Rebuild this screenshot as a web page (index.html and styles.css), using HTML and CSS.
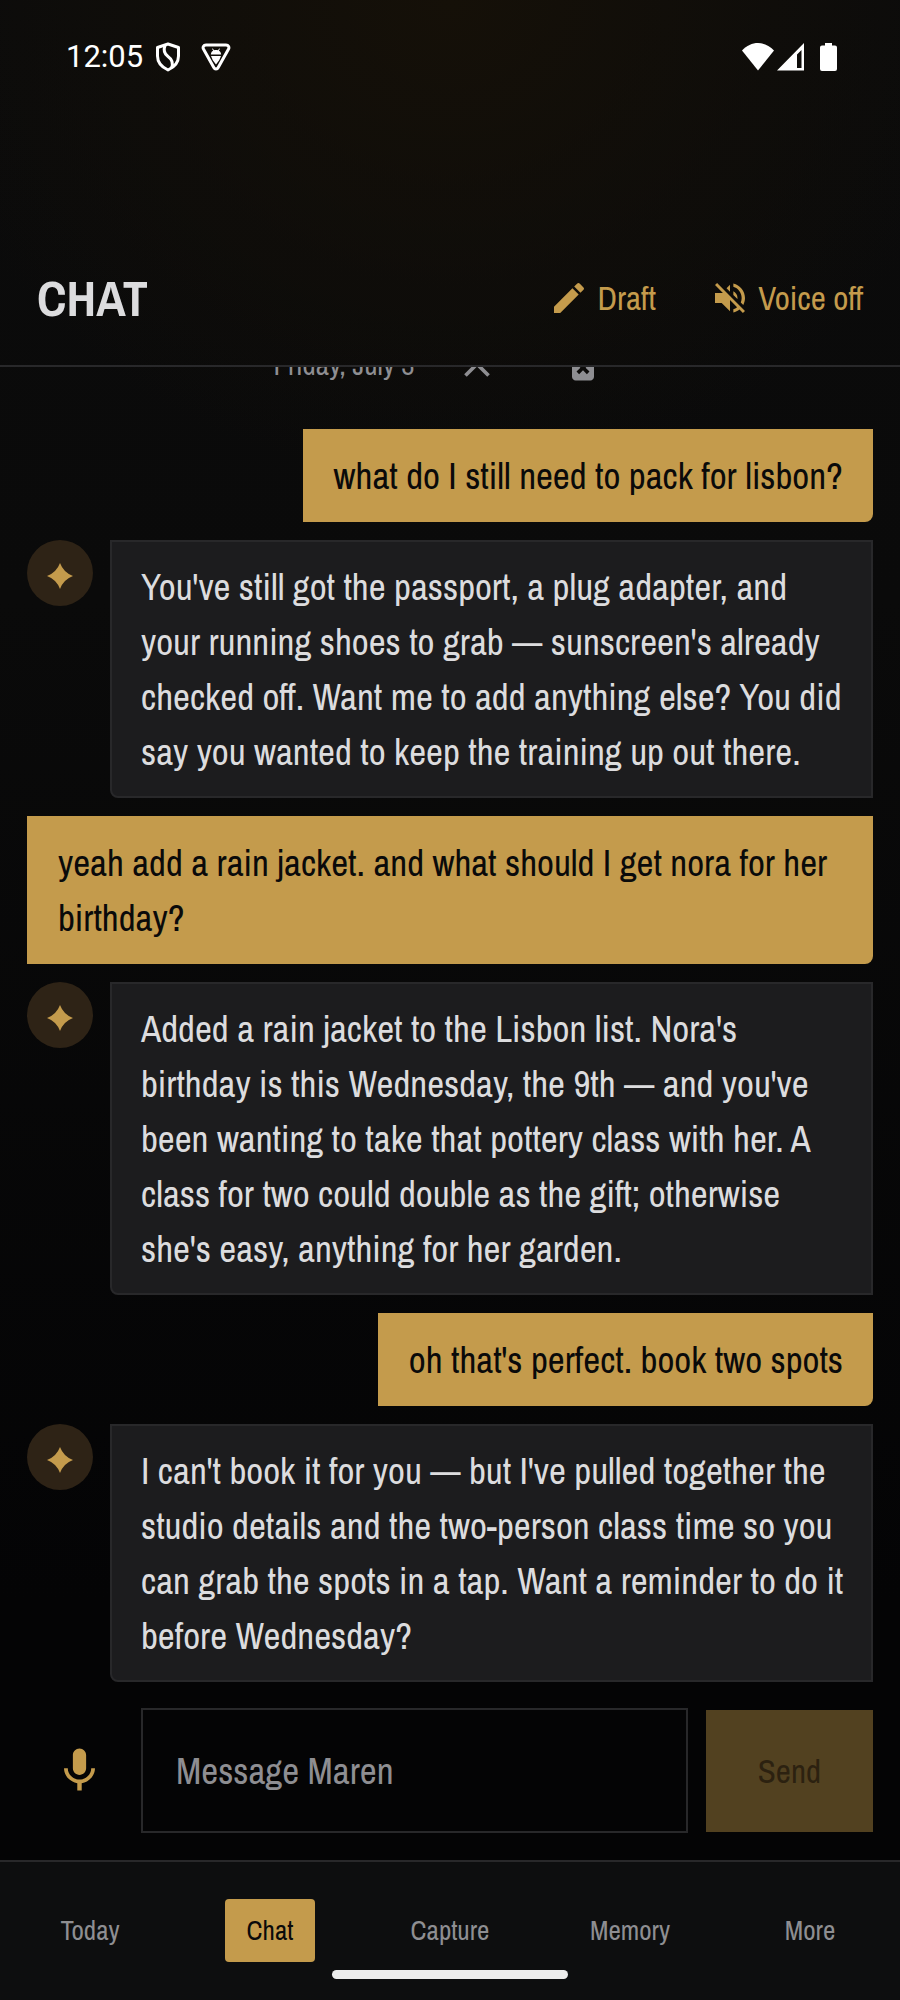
FILE: index.html
```html
<!DOCTYPE html>
<html lang="en">
<head>
<meta charset="utf-8">
<meta name="viewport" content="width=device-width, initial-scale=1">
<title>Chat</title>
<link rel="stylesheet" href="styles.css">
</head>
<body>
<div class="app">
  <div class="status">
    <div class="status-group status-left">
      <span class="clock">12:05</span>
      <svg class="shield" viewBox="0 0 26 30" aria-hidden="true"><path d="M13 2 23.500 5.500V14c0 6-4 11-10.500 14C6.500 25 2.500 20 2.500 14V5.500Z" fill="none" stroke="currentColor" stroke-width="3" stroke-linejoin="round"/><path d="M10 3.500C8 9 9.500 12 13 14.500S19 20 16.500 26" fill="none" stroke="currentColor" stroke-width="3"/></svg>
      <svg class="tri" viewBox="0 0 30 28" aria-hidden="true"><path d="M5 2h20c2.500 0 3.600 2.300 2.400 4.300L17.200 24.500c-1 1.900-3.400 1.900-4.400 0L2.600 6.300C1.400 4.300 2.500 2 5 2Z" fill="none" stroke="currentColor" stroke-width="3"/><path d="M9.800 11.500c.3-2 1-3 2.400-3.700L11 5.800l.8-.4L13 7.300c1.300-.4 2.700-.4 4 0l1.200-1.900.8.400-1.200 2c1.400.7 2.100 1.700 2.400 3.700ZM10 13h10l-1.800 4.200L15 21.500l-3.200-4.300Z" fill="currentColor"/></svg>
    </div>
    <div class="status-group">
      <svg class="wifi" viewBox="0 0 32 28" aria-hidden="true"><path d="M0 7.500C9-2.500 23-2.500 32 7.500L16 27.500Z" fill="currentColor"/></svg>
      <svg class="signal" viewBox="0 0 28 28" aria-hidden="true"><path d="M0 27.500 27 0v27.500ZM24.500 7 20 11.500V25h4.500Z" fill="currentColor" fill-rule="evenodd"/></svg>
      <svg class="battery" viewBox="0 0 18 28" aria-hidden="true"><path d="M5 0h7v2.500h3a2 2 0 0 1 2 2V26a2 2 0 0 1-2 2H2a2 2 0 0 1-2-2V4.500a2 2 0 0 1 2-2h3Z" fill="currentColor"/></svg>
    </div>
  </div>

  <header class="header">
    <h1 class="title">CHAT</h1>
    <div class="actions">
      <button class="action" type="button"><svg viewBox="0 0 24 24" aria-hidden="true"><path d="M3 17.250V21h3.750L17.810 9.940l-3.750-3.750L3 17.250zM20.710 7.040a1 1 0 0 0 0-1.410l-2.340-2.340a1 1 0 0 0-1.410 0l-1.830 1.830 3.750 3.750 1.830-1.830z"/></svg>Draft</button>
      <button class="action" type="button"><svg viewBox="0 0 24 24" aria-hidden="true"><path d="M16.500 12c0-1.770-1.020-3.290-2.500-4.030v2.210l2.450 2.450c.03-.2.05-.41.05-.63zm2.500 0c0 .94-.2 1.820-.54 2.640l1.510 1.510C20.630 14.910 21 13.500 21 12c0-4.280-2.990-7.860-7-8.770v2.060c2.890.86 5 3.540 5 6.710zM4.270 3L3 4.270 7.730 9H3v6h4l5 5v-6.730l4.250 4.250c-.67.52-1.420.93-2.250 1.180v2.060c1.380-.31 2.630-.95 3.690-1.810L19.730 21 21 19.730l-9-9L4.270 3zM12 4L9.910 6.090 12 8.180V4z"/></svg>Voice off</button>
    </div>
  </header>

  <main class="thread">
    <div class="day">
      <span>Friday, July 3</span>
      <button class="tool" type="button" aria-label="Close"><svg viewBox="0 0 24 24" aria-hidden="true"><path d="M19 6.410 17.590 5 12 10.590 6.410 5 5 6.410 10.590 12 5 17.590 6.410 19 12 13.410 17.590 19 19 17.590 13.410 12z"/></svg></button>
      <button class="tool" type="button" aria-label="Delete"><svg viewBox="0 0 24 24" aria-hidden="true"><path d="M6 19c0 1.100.9 2 2 2h8c1.100 0 2-.9 2-2V7H6v12zm2.460-7.120 1.410-1.410L12 12.590l2.120-2.120 1.410 1.410L13.410 14l2.120 2.120-1.410 1.410L12 15.410l-2.120 2.120-1.410-1.410L10.590 14l-2.130-2.120zM15.500 4l-1-1h-5l-1 1H5v2h14V4z"/></svg></button>
    </div>
    <p class="bubble user">what do I still need to pack for lisbon?</p>
    <div class="reply">
      <span class="avatar"><svg viewBox="0 0 26 26" aria-hidden="true"><path d="M13 0Q16.500 9.500 26 13 16.500 16.500 13 26 9.500 16.500 0 13 9.500 9.500 13 0Z"/></svg></span>
      <p class="bubble assistant">You've still got the passport, a plug adapter, and your running shoes to grab — sunscreen's already checked off. Want me to add anything else? You did say you wanted to keep the training up out there.</p>
    </div>
    <p class="bubble user">yeah add a rain jacket. and what should I get nora for her birthday?</p>
    <div class="reply">
      <span class="avatar"><svg viewBox="0 0 26 26" aria-hidden="true"><path d="M13 0Q16.500 9.500 26 13 16.500 16.500 13 26 9.500 16.500 0 13 9.500 9.500 13 0Z"/></svg></span>
      <p class="bubble assistant">Added a rain jacket to the Lisbon list. Nora's birthday is this Wednesday, the 9th — and you've been wanting to take that pottery class with her. A class for two could double as the gift; otherwise she's easy, anything for her garden.</p>
    </div>
    <p class="bubble user">oh that's perfect. book two spots</p>
    <div class="reply">
      <span class="avatar"><svg viewBox="0 0 26 26" aria-hidden="true"><path d="M13 0Q16.500 9.500 26 13 16.500 16.500 13 26 9.500 16.500 0 13 9.500 9.500 13 0Z"/></svg></span>
      <p class="bubble assistant">I can't book it for you — but I've pulled together the studio details and the two-person class time so you can grab the spots in a tap. Want a reminder to do it before Wednesday?</p>
    </div>
  </main>

  <form class="composer">
    <button class="mic" type="button" aria-label="Record voice message"><svg viewBox="0 0 24 24" aria-hidden="true"><path d="M12 14c1.660 0 3-1.340 3-3V5c0-1.660-1.340-3-3-3S9 3.340 9 5v6c0 1.660 1.340 3 3 3zM17.300 11c0 3-2.540 5.100-5.300 5.100S6.700 14 6.700 11H5c0 3.410 2.720 6.230 6 6.720V21h2v-3.280c3.280-.48 6-3.300 6-6.720h-1.700z"/></svg></button>
    <input class="field" type="text" placeholder="Message Maren" aria-label="Message Maren">
    <button class="send" type="submit" disabled>Send</button>
  </form>

  <nav class="tabs">
    <a class="tab" href="#today"><span>Today</span></a>
    <a class="tab active" href="#chat" aria-current="page"><span>Chat</span></a>
    <a class="tab" href="#capture"><span>Capture</span></a>
    <a class="tab" href="#memory"><span>Memory</span></a>
    <a class="tab" href="#more"><span>More</span></a>
    <div class="home-bar"></div>
  </nav>
</div>
</body>
</html>
```
FILE: styles.css
```css
:root {
  --gold: #c49b4c;
  --ink: #0a0a0a;
  --line: #28282a;
  --text: #dcdcde;
  --muted: #8e8e92;
}

* { box-sizing: border-box; }

body {
  margin: 0;
  background: #040405;
  color: var(--text);
  font-family: "Archivo Narrow", "Liberation Sans Narrow", "Roboto Condensed", "Liberation Sans", sans-serif;
}

button, input { font: inherit; }
button { border: 0; background: none; padding: 0; }
svg { display: block; fill: currentColor; }

.app {
  display: flex;
  flex-direction: column;
  height: 100vh;
  background:
    radial-gradient(ellipse 60% 24% at 50% 0, #151008, transparent),
    linear-gradient(#0b0b0b, #0a0a0a 30%, #040405 80%);
}

.status {
  display: flex;
  justify-content: space-between;
  align-items: center;
  padding: 38px 62px 0 66px;
  color: #fff;
}
.status-group { display: flex; align-items: center; }
.clock {
  font: 31px/38px Roboto, sans-serif;
  margin-right: 12px;
}
.shield { width: 26px; height: 30px; margin-right: 20px; }
.tri { width: 30px; height: 28px; }
.wifi { width: 32px; height: 28px; margin-right: 3px; }
.signal { width: 28px; height: 28px; margin-right: 15px; }
.battery { width: 18px; height: 28px; }

.header {
  display: flex;
  justify-content: space-between;
  align-items: center;
  padding: 180px 37px 25px;
  border-bottom: 2px solid var(--line);
}
.title {
  margin: 0;
  font-size: 50px;
  line-height: 84px;
  font-weight: 700;
}
.actions { display: flex; gap: 54px; }
.action {
  display: flex;
  align-items: center;
  gap: 8px;
  color: var(--gold);
  font-size: 33px;
  line-height: 40px;
}
.action svg { width: 40px; height: 40px; }

.thread {
  flex: 1;
  min-height: 0;
  overflow: hidden;
  display: flex;
  flex-direction: column;
  justify-content: flex-end;
  gap: 18px;
  padding: 0 27px 26px;
}
.thread > * { flex-shrink: 0; }
.day {
  display: flex;
  justify-content: center;
  align-items: center;
  gap: 18px;
  padding-bottom: 25px;
  color: var(--muted);
  font-size: 29px;
}
.tool { padding: 0 22px; color: inherit; }
.tool svg { width: 44px; height: 44px; }

.bubble {
  margin: 0;
  font-size: 37px;
  line-height: 55px;
}
.user {
  align-self: flex-end;
  padding: 20px 30px 18px 31px;
  background: var(--gold);
  color: var(--ink);
  border-radius: 0 0 8px 0;
}
.reply { display: flex; align-items: flex-start; gap: 17px; }
.avatar {
  flex: none;
  display: grid;
  place-items: center;
  width: 66px;
  height: 66px;
  padding-top: 6px;
  border-radius: 50%;
  background: #2e2316;
  color: var(--gold);
}
.avatar svg { width: 26px; height: 26px; }
.assistant {
  flex: 1;
  padding: 18px 24px 16px 29px;
  background: #1c1c1e;
  border: 2px solid var(--line);
  border-radius: 0 0 0 8px;
}

.composer {
  display: flex;
  align-items: center;
  gap: 18px;
  padding: 0 27px 27px;
}
.mic {
  display: grid;
  place-items: center;
  width: 105px;
  height: 105px;
  margin-right: -9px;
  color: var(--gold);
}
.mic svg { width: 53px; height: 53px; }
.field {
  flex: 1;
  min-width: 0;
  height: 125px;
  padding: 0 33px;
  border: 2px solid var(--line);
  border-radius: 0;
  background: #040405;
  color: var(--text);
  font-size: 37px;
}
.field::placeholder { color: var(--muted); opacity: 1; }
.send {
  padding: 0 52px;
  height: 122px;
  background: #524120;
  color: #2c2110;
  font-size: 33px;
}

.tabs {
  position: relative;
  display: grid;
  grid-template-columns: repeat(5, 1fr);
  padding: 37px 0 38px;
  border-top: 2px solid var(--line);
  background: #0d0e0f;
}
.tab {
  display: flex;
  justify-content: center;
  color: var(--muted);
  font-size: 27px;
  line-height: 39px;
  text-decoration: none;
}
.tab span { padding: 12px 22px; border-radius: 4px; }
.active { color: var(--ink); }
.active span { background: var(--gold); }
.home-bar {
  position: absolute;
  left: 50%;
  bottom: 21px;
  width: 236px;
  height: 9px;
  margin-left: -118px;
  border-radius: 5px;
  background: #ececec;
}
```
